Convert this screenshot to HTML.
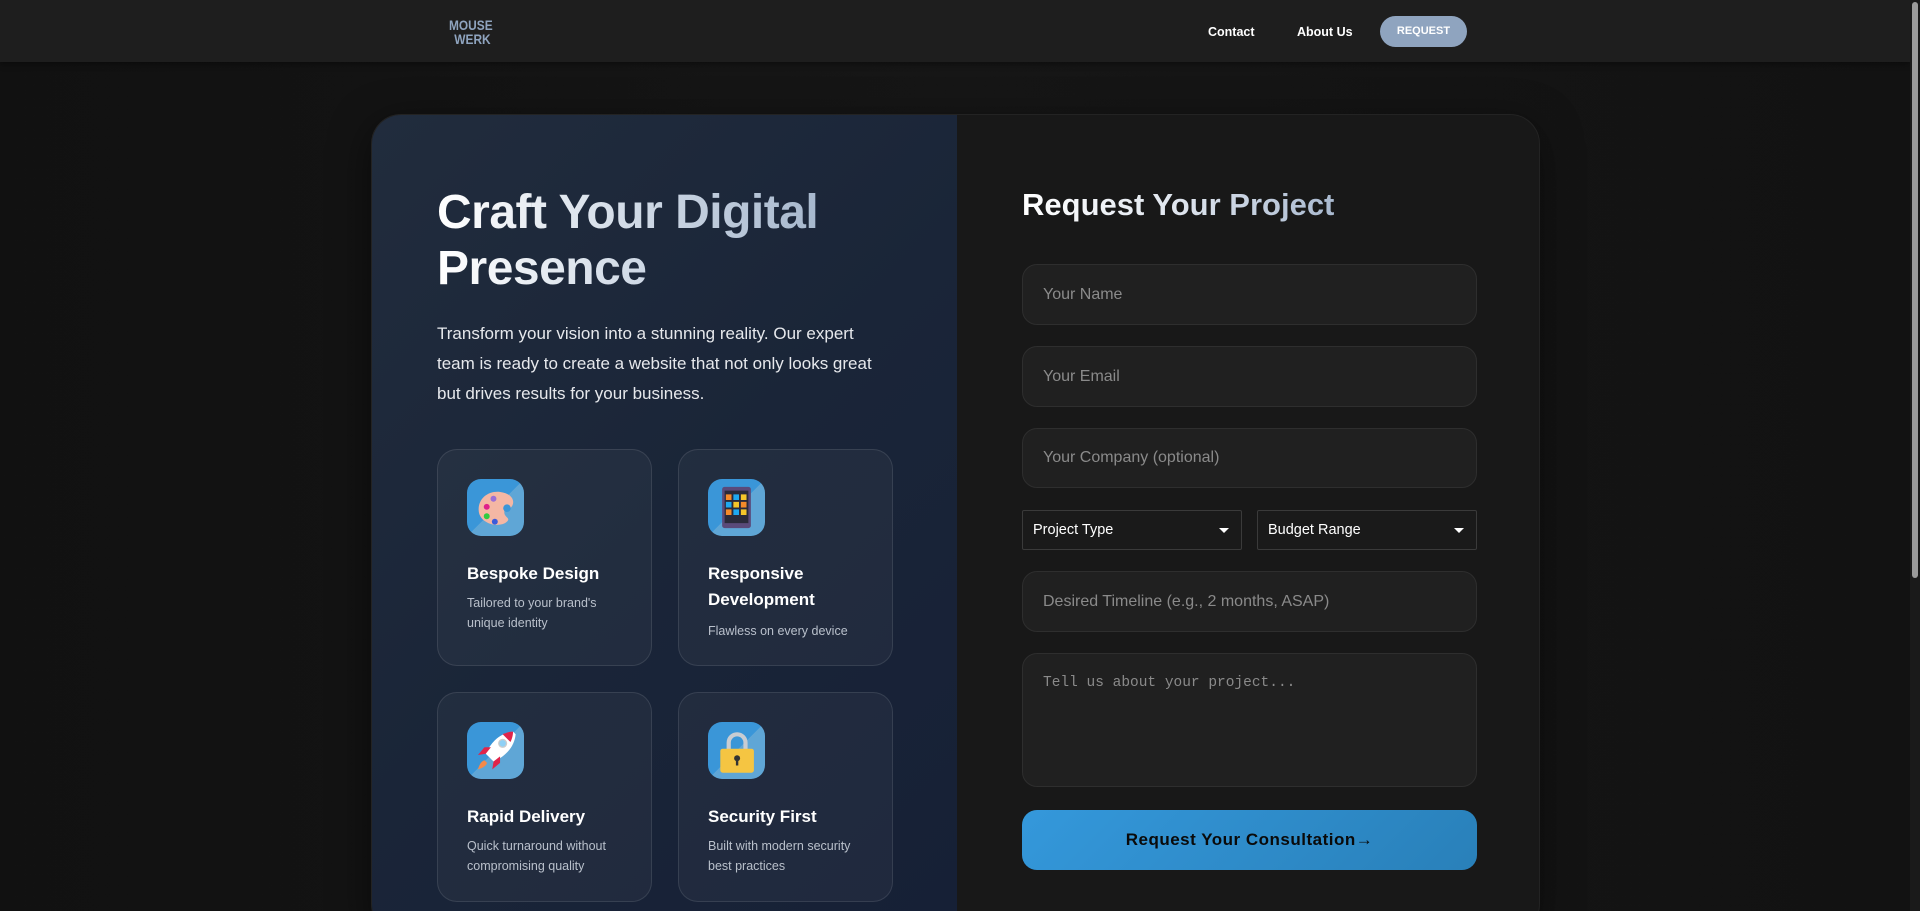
<!DOCTYPE html>
<html><head><meta charset="utf-8"><style>
*{box-sizing:border-box;margin:0;padding:0}
html,body{width:1920px;height:911px;overflow:hidden}
body{background:linear-gradient(90deg,#111 0%,#161616 50%,#121212 100%);font-family:"Liberation Sans","DejaVu Sans",sans-serif;position:relative}
.nav{position:absolute;left:0;top:0;width:1910px;height:62px;background:#1e1e1e;box-shadow:0 2px 6px rgba(0,0,0,.4)}
.logo{position:absolute;left:449px;top:18px;color:#8fa4bf;font-weight:bold;font-size:14px;line-height:14px;text-align:center;letter-spacing:0;transform:scaleX(0.85);transform-origin:left}
.nl{position:absolute;top:25px;color:#fff;font-size:12.5px;font-weight:bold}
.req{position:absolute;left:1380px;top:16px;width:87px;height:31px;border-radius:16px;background:#8fa4bf;color:#fff;font-size:11px;font-weight:bold;text-align:center;line-height:31px}
.sb{position:absolute;right:0;top:0;width:10px;height:911px;background:#1a1a1a}
.sb div{position:absolute;left:2px;top:2px;width:6px;height:576px;background:#9a9a9a;border-radius:3px}
.card{position:absolute;left:371px;top:114px;width:1169px;height:820px;border-radius:30px;overflow:hidden;background:#181818;border:1px solid #232323;box-shadow:0 10px 40px rgba(0,0,0,.5)}
.left{position:absolute;left:0;top:0;width:585px;height:100%;background:linear-gradient(135deg,#212c3d 0%,#1a2538 50%,#162036 100%)}
h1{position:absolute;left:65px;top:70px;font-size:48px;line-height:56px;font-weight:bold;background:linear-gradient(90deg,#fff 0%,#c9d4e2 60%,#a7b8cd 100%);-webkit-background-clip:text;color:transparent;letter-spacing:-0.5px}
.p{position:absolute;left:65px;top:204px;font-size:17px;line-height:30px;color:#e6e8ec;white-space:nowrap}
.f{position:absolute;width:215px;border-radius:20px;background:rgba(255,255,255,.04);border:1px solid rgba(255,255,255,.1)}
.ic{position:absolute;left:29px;top:29px;width:57px;height:57px;border-radius:14px;background:linear-gradient(135deg,#3a96d8 50%,#5fa6d6 50%)}
.ic svg{position:absolute;left:0;top:0}
.f h3{position:absolute;left:29px;font-size:17px;line-height:26px;color:#fff;font-weight:bold}
.f p{position:absolute;left:29px;font-size:12.5px;line-height:20px;color:#b9c0cb}
h2{position:absolute;left:650px;top:72px;font-size:31px;font-weight:bold;background:linear-gradient(90deg,#fff 0%,#dfe5ee 50%,#a9b9cf 100%);-webkit-background-clip:text;color:transparent}
.in{position:absolute;left:650px;width:455px;background:#202020;border:1px solid #2e2e2e;border-radius:15px;color:#8a8a8a;font-size:16px;padding-left:20px}
.sel{position:absolute;height:40px;width:220px;background:#1a1a1a;border:1px solid #3a3a3a;border-radius:2px;color:#fff;font-size:14.5px;line-height:38px;padding-left:10px}
.sel:after{content:"";position:absolute;right:12px;top:17px;border-left:5px solid transparent;border-right:5px solid transparent;border-top:5px solid #fff}
.btn{position:absolute;left:650px;top:695px;width:455px;height:60px;border-radius:15px;background:linear-gradient(135deg,#3498db,#2980b9);color:#0a0a0a;font-weight:bold;font-size:17px;text-align:center;line-height:60px;letter-spacing:0.5px}
</style></head><body>
<div class="nav">
<div class="logo">MOUSE<br>&nbsp;WERK</div>
<div class="nl" style="left:1208px">Contact</div>
<div class="nl" style="left:1297px">About Us</div>
<div class="req">REQUEST</div>
</div>
<div class="card">
<div class="left">
<h1>Craft Your Digital<br>Presence</h1>
<div class="p">Transform your vision into a stunning reality. Our expert<br>team is ready to create a website that not only looks great<br>but drives results for your business.</div>

<div class="f" style="left:65px;top:334px;height:217px">
<div class="ic"><svg width="57" height="57"><g transform="translate(28.5 28.5) scale(1.35) translate(-28.5 -28.5)"><path d="M16 30c0-9 8-14 16-13s11 6 9 10-6 1-6 5 5 4 2 7-10 3-14 1-7-5-7-10z" fill="#f4b7a4"/><circle cx="22" cy="28" r="2.2" fill="#e0218a"/><circle cx="27" cy="22" r="2.2" fill="#9b6fd6"/><circle cx="22" cy="35" r="2.2" fill="#2ecc40"/><circle cx="28" cy="39" r="2.2" fill="#3b5bdb"/><circle cx="37" cy="29" r="2.8" fill="#3a96d8"/></g></svg></div>
<h3 style="top:111px">Bespoke Design</h3>
<p style="top:143px">Tailored to your brand's<br>unique identity</p>
</div>
<div class="f" style="left:306px;top:334px;height:217px">
<div class="ic"><svg width="57" height="57"><g transform="translate(28.5 28.5) scale(1.25) translate(-28.5 -28.5)"><rect x="17" y="12" width="23" height="33" rx="2" fill="#5a4a7a"/><rect x="19" y="15" width="19" height="26" fill="#2a2a3a"/><g><rect x="20" y="18" width="4.5" height="4.5" fill="#f58a2a"/><rect x="26" y="18" width="4.5" height="4.5" fill="#1fa8f0"/><rect x="32" y="18" width="4.5" height="4.5" fill="#f5c52a"/><rect x="20" y="24" width="4.5" height="4.5" fill="#1fa8f0"/><rect x="26" y="24" width="4.5" height="4.5" fill="#f5c52a"/><rect x="32" y="24" width="4.5" height="4.5" fill="#f58a2a"/><rect x="20" y="30" width="4.5" height="4.5" fill="#f58a2a"/><rect x="26" y="30" width="4.5" height="4.5" fill="#1fa8f0"/><rect x="32" y="30" width="4.5" height="4.5" fill="#f5c52a"/></g></g></svg></div>
<h3 style="top:111px">Responsive<br>Development</h3>
<p style="top:171px">Flawless on every device</p>
</div>
<div class="f" style="left:65px;top:577px;height:210px">
<div class="ic"><svg width="57" height="57"><g transform="translate(28.5 28.5) scale(1.3) translate(-28.5 -28.5)"><path d="M42 14c-10 1-17 8-21 17l6 6c9-4 16-11 17-21z" fill="#fff"/><path d="M42 14c0 3-1 6-2 8l-6-6c2-1 5-2 8-2z" fill="#e0244a"/><circle cx="34" cy="23" r="3" fill="#8fd0f5" stroke="#ccc"/><path d="M21 31l-6 1 5-6 5 0z M27 37l-1 6 6-5 0-5z" fill="#e0244a"/><path d="M20 36c-3 1-4 4-5 7 3-1 6-2 7-5z" fill="#f58a4a"/></g></svg></div>
<h3 style="top:111px">Rapid Delivery</h3>
<p style="top:143px">Quick turnaround without<br>compromising quality</p>
</div>
<div class="f" style="left:306px;top:577px;height:210px">
<div class="ic"><svg width="57" height="57"><g transform="translate(28.5 28.5) scale(1.2) translate(-28.5 -28.5)"><path d="M22 28v-6a7 7 0 0 1 14 0v6" fill="none" stroke="#c8ccd2" stroke-width="3.5"/><rect x="15" y="27" width="28" height="20" rx="2" fill="#f5c542"/><circle cx="29" cy="35" r="2.5" fill="#333"/><rect x="28" y="35" width="2" height="6" fill="#333"/></g></svg></div>
<h3 style="top:111px">Security First</h3>
<p style="top:143px">Built with modern security<br>best practices</p>
</div>
</div>
<h2>Request Your Project</h2>
<div class="in" style="top:149px;height:61px;line-height:59px">Your Name</div>
<div class="in" style="top:231px;height:61px;line-height:59px">Your Email</div>
<div class="in" style="top:313px;height:60px;line-height:58px">Your Company (optional)</div>
<div class="sel" style="left:650px;top:395px">Project Type</div>
<div class="sel" style="left:885px;top:395px">Budget Range</div>
<div class="in" style="top:456px;height:61px;line-height:59px">Desired Timeline (e.g., 2 months, ASAP)</div>
<div class="in" style="top:538px;height:134px;font-family:'Liberation Mono','DejaVu Sans Mono',monospace;font-size:14.5px;padding-top:20px;line-height:18px">Tell us about your project...</div>
<div class="btn">Request Your Consultation→</div>
</div>
<div class="sb"><div></div></div>
</body></html>
